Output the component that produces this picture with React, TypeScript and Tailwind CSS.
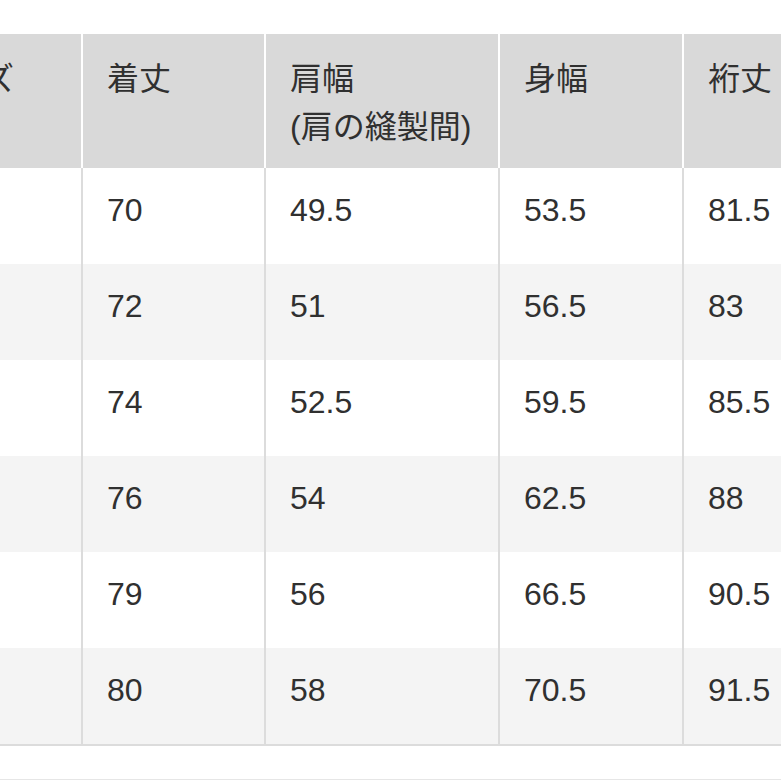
// Size chart table (cropped view)

const rows = [
  { size: 'S', length: '70', shoulder: '49.5', chest: '53.5', sleeve: '81.5' },
  { size: 'M', length: '72', shoulder: '51', chest: '56.5', sleeve: '83' },
  { size: 'L', length: '74', shoulder: '52.5', chest: '59.5', sleeve: '85.5' },
  { size: 'XL', length: '76', shoulder: '54', chest: '62.5', sleeve: '88' },
  { size: 'XXL', length: '79', shoulder: '56', chest: '66.5', sleeve: '90.5' },
  { size: '3XL', length: '80', shoulder: '58', chest: '70.5', sleeve: '91.5' },
];

export default function App() {
  return (
    <div
      className="w-[781px] h-[781px] bg-white overflow-hidden text-[#303030] text-[32px] leading-[48px]"
      style={{ fontFamily: '"Liberation Sans", "Noto Sans CJK JP", sans-serif' }}
    >
      <div className="h-[34px]" />
      <div className="ml-[-105px] w-[972px]">
        {/* Header */}
        <div className="flex h-[134px] bg-[#d9d9d9]">
          <div className="w-[186px] pl-6 pt-[21px]">
            <span className="invisible">サイ</span>ズ
          </div>
          <div className="w-[183px] border-l-2 border-white pl-6 pt-[21px]">着丈</div>
          <div className="w-[234px] border-l-2 border-white pl-6 pt-[21px]">
            <div>肩幅</div>
            <div>(肩の縫製間)</div>
          </div>
          <div className="w-[184px] border-l-2 border-white pl-6 pt-[21px]">身幅</div>
          <div className="w-[185px] border-l-2 border-white pl-6 pt-[21px]">裄丈</div>
        </div>

        {/* Body */}
        {rows.map((r, i) => (
          <div
            key={r.size}
            className={`flex h-[96px] ${i % 2 === 1 ? 'bg-[#f4f4f4]' : 'bg-white'}`}
          >
            <div className="w-[186px] pl-6 pt-[18px]">
              <span className="invisible">{r.size}</span>
            </div>
            <div className="w-[183px] border-l-2 border-[#dcdcdc] pl-6 pt-[18px]">{r.length}</div>
            <div className="w-[234px] border-l-2 border-[#dcdcdc] pl-6 pt-[18px]">{r.shoulder}</div>
            <div className="w-[184px] border-l-2 border-[#dcdcdc] pl-6 pt-[18px]">{r.chest}</div>
            <div className="w-[185px] border-l-2 border-[#dcdcdc] pl-6 pt-[18px]">{r.sleeve}</div>
          </div>
        ))}
        <div className="h-[2px] bg-[#dcdcdc]" />
      </div>
      <div className="h-[33px]" />
      <div className="h-px bg-[#e6e6e6]" />
    </div>
  );
}
